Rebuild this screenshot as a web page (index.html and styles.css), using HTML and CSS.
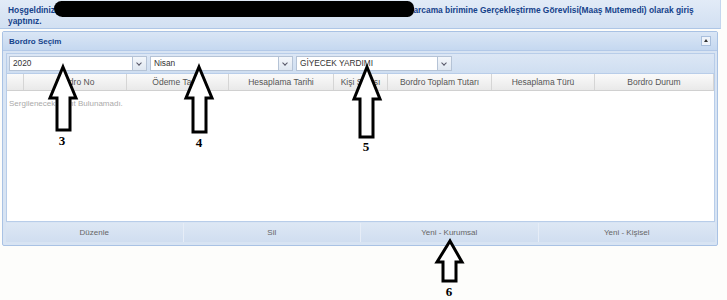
FILE: index.html
```html
<!DOCTYPE html>
<html lang="tr">
<head>
  <meta charset="UTF-8" />
  <title>Bordro Seçim</title>
  <link rel="stylesheet" href="styles.css">
</head>
<body>

<div class="welcome">
  Hoşgeldiniz <span class="redact"></span>harcama birimine Gerçekleştirme Görevlisi(Maaş Mutemedi) olarak giriş<br>yaptınız.
</div>

<div class="panel">
  <div class="panel-head">
    <span>Bordro Seçim</span>
    <span class="collapse"></span>
  </div>
  <div class="panel-body">
    <div class="frame">
      <div class="toolbar">
        <div class="combo w1"><span class="val">2020</span><span class="trigger"></span></div>
        <div class="combo w2"><span class="val">Nisan</span><span class="trigger"></span></div>
        <div class="combo w3"><span class="val">GİYECEK YARDIMI</span><span class="trigger"></span></div>
      </div>
      <div class="grid-head">
        <div class="col c0"></div>
        <div class="col c1">Bordro No</div>
        <div class="col c2">Ödeme Tarihi</div>
        <div class="col c3">Hesaplama Tarihi</div>
        <div class="col c4">Kişi Sayısı</div>
        <div class="col c5">Bordro Toplam Tutarı</div>
        <div class="col c6">Hesaplama Türü</div>
        <div class="col c7">Bordro Durum</div>
      </div>
      <div class="grid-body">
        <div class="empty">Sergilenecek Kayıt Bulunamadı.</div>
      </div>
    </div>
    <div class="buttons">
      <div class="btn">Düzenle</div>
      <div class="btn">Sil</div>
      <div class="btn">Yeni - Kurumsal</div>
      <div class="btn">Yeni - Kişisel</div>
    </div>
  </div>
</div>

<!-- annotation arrows drawn over the screen -->
<svg class="marks" width="727" height="300" viewBox="0 0 727 300">
  <g fill="#fff" stroke="#000" stroke-width="3" stroke-linejoin="miter">
    <path d="M63 67 L76 98 L70 98 L70 130 L57 130 L57 98 L50 98 Z" />
    <path d="M199 67 L212 98 L206 98 L206 132 L193 132 L193 98 L186 98 Z" />
    <path d="M367 67 L380 99 L373 99 L373 137 L360 137 L360 99 L354 99 Z" />
    <path d="M450 241 L462 262 L456 262 L456 281 L443 281 L443 262 L437 262 Z" />
  </g>
  <g class="num">
    <text x="62" y="145">3</text>
    <text x="199" y="147">4</text>
    <text x="366" y="151">5</text>
    <text x="449" y="296">6</text>
  </g>
</svg>

</body>
</html>
```

FILE: styles.css
```css
body {
  margin: 0;
  background: #fdfdfb;
  font-family: "Liberation Sans", Arial, sans-serif;
  font-size: 8px;
  color: #555;
  position: relative;
  width: 727px;
  height: 300px;
  overflow: hidden;
}
.welcome {
  width: 712px;
  height: 23px;
  padding: 5px 0 0 8px;
  background: linear-gradient(#e2ebf7, #d2e0f2);
  border-bottom: 1px solid #aec6e6;
  border-right: 1px solid #c4d6ee;
  color: #15428b;
  font-size: 8.4px;
  font-weight: bold;
  line-height: 11px;
}
.redact {
  display: inline-block;
  position: relative;
  z-index: 1;
  width: 360px;
  height: 16px;
  margin: -4px -6px -4px -3px;
  vertical-align: top;
  background: #000;
  border-radius: 8px 7px 7px 9px;
}
.panel {
  margin: 2px 0 0 2px;
  width: 714px;
  border: 1px solid #a9c2e4;
  border-radius: 2px;
  background: #d8e4f3;
}
.panel-head {
  height: 18px;
  padding: 0 6px;
  display: flex;
  align-items: center;
  justify-content: space-between;
  background: linear-gradient(#dae6f5, #c5d8f0);
  border-bottom: 1px solid #b3c9e8;
  color: #15428b;
  font-weight: bold;
}
.collapse {
  width: 8px;
  height: 8px;
  background: #eef3fa;
  border: 1px solid #a9bfdc;
  position: relative;
}
.collapse::after {
  content: "";
  position: absolute;
  left: 2px;
  top: 2px;
  border-left: 2px solid transparent;
  border-right: 2px solid transparent;
  border-bottom: 3px solid #333;
}
.panel-body {
  padding: 2px 2px 3px 3px;
}
.frame {
  border: 1px solid #b8cde9;
  background: #fff;
}
.toolbar {
  height: 19px;
  display: flex;
  align-items: center;
  gap: 3px;
  padding-left: 2px;
  background: linear-gradient(#dce7f5, #cfdef1);
  border-bottom: 1px solid #b8cde9;
}
.combo {
  height: 13px;
  display: flex;
  background: #fff;
  border: 1px solid #b5c3d6;
}
.combo .val {
  flex: 1;
  padding-left: 3px;
  line-height: 13px;
  color: #333;
  font-size: 8.3px;
}
.combo .trigger {
  width: 13px;
  border-left: 1px solid #b5c3d6;
  background: linear-gradient(#f4f7fb, #dfe7f1);
  position: relative;
}
.combo .trigger::after {
  content: "";
  position: absolute;
  left: 4px;
  top: 4px;
  width: 3px;
  height: 3px;
  border-right: 1px solid #556;
  border-bottom: 1px solid #556;
  transform: rotate(45deg);
}
.w1 { width: 136px; }
.w2 { width: 141px; }
.w3 { width: 154px; }
.grid-head {
  height: 16px;
  display: flex;
  background: linear-gradient(#fafafa, #e9e9e9);
  border-bottom: 1px solid #d0d0d0;
}
.col {
  border-right: 1px solid #d5d5d5;
  text-align: center;
  line-height: 16px;
  font-size: 8.5px;
  color: #555;
  white-space: nowrap;
  overflow: hidden;
}
.c0 { width: 16px; }
.c1 { width: 102px; }
.c2 { width: 101px; }
.c3 { width: 104px; }
.c4 { width: 53px; }
.c5 { width: 103px; }
.c6 { width: 102px; }
.c7 { flex: 1; }
.grid-body {
  height: 130px;
}
.empty {
  padding: 8px 0 0 2px;
  color: #aaa;
}
.buttons {
  height: 19px;
  margin-top: 1px;
  display: flex;
  background: linear-gradient(#dde7f4, #d0def0);
}
.btn {
  flex: 1;
  text-align: center;
  line-height: 19px;
  color: #666;
  border-right: 1px solid #e6edf7;
}
.btn:last-child {
  border-right: none;
}
.marks {
  position: absolute;
  left: 0;
  top: 0;
  pointer-events: none;
}
.marks .num {
  font-family: "Liberation Serif", serif;
  font-weight: bold;
  font-size: 13px;
  text-anchor: middle;
  fill: #000;
}
```
